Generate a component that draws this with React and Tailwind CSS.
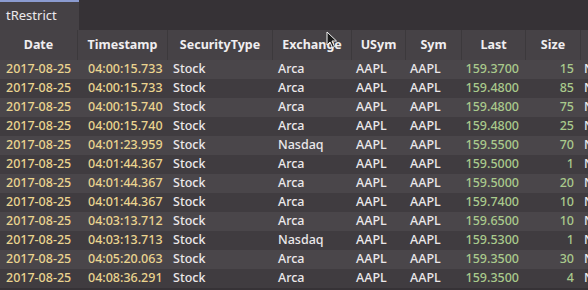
import React from "react";

const rows = [
  ["04:00:15.733", "Arca", "159.3700", "15"],
  ["04:00:15.733", "Arca", "159.4800", "85"],
  ["04:00:15.740", "Arca", "159.4800", "75"],
  ["04:00:15.740", "Arca", "159.4800", "25"],
  ["04:01:23.959", "Nasdaq", "159.5500", "70"],
  ["04:01:44.367", "Arca", "159.5000", "1"],
  ["04:01:44.367", "Arca", "159.5000", "20"],
  ["04:01:44.367", "Arca", "159.7400", "10"],
  ["04:03:13.712", "Arca", "159.6500", "10"],
  ["04:03:13.713", "Nasdaq", "159.5300", "1"],
  ["04:05:20.063", "Arca", "159.3500", "30"],
  ["04:08:36.291", "Arca", "159.3500", "4"],
];

const headers = [
  ["Date", "w-[78px]"],
  ["Timestamp", "w-[90px]"],
  ["SecurityType", "w-[105px]"],
  ["Exchange", "w-[79px]"],
  ["USym", "w-[54px]"],
  ["Sym", "w-[56px]"],
  ["Last", "w-[64px]"],
  ["Size", "w-[55px]"],
];

export default function App() {
  return (
    <div
      className="relative w-[588px] h-[290px] overflow-hidden bg-[#363236] text-[12.5px] font-medium text-[#ebe8ea]"
      style={{ fontFamily: '"Noto Sans", "Open Sans", sans-serif' }}
    >
      <div className="flex h-[30px]">
        <div className="w-[79px] h-[30px] bg-[#454145] border-t-2 border-[#8b9bd0] flex items-center pl-[6px] text-[13px] font-normal text-[#ece9eb]">
          tRestrict
        </div>
      </div>
      <div className="flex h-[30px] bg-[#464246] font-bold text-[12.5px] text-[#f0eef0]">
        {headers.map(([h, w]) => (
          <div
            key={h}
            className={`${w} shrink-0 flex items-center justify-center border-r border-[#3c393c]`}
          >
            {h}
          </div>
        ))}
        <div className="flex-1" />
      </div>
      <div>
        {rows.map((r, i) => (
          <div
            key={i}
            className={`flex h-[19px] items-center ${i % 2 === 0 ? "bg-[#4a464a]" : "bg-[#403c40]"}`}
          >
            <div className="w-[78px] shrink-0 pl-[6px] text-[#ead48f]">2017-08-25</div>
            <div className="w-[90px] shrink-0 pl-[10px] text-[#ead48f]">{r[0]}</div>
            <div className="w-[105px] shrink-0 pl-[5px]">Stock</div>
            <div className="w-[79px] shrink-0 pl-[5px]">{r[1]}</div>
            <div className="w-[54px] shrink-0 pl-[4px]">AAPL</div>
            <div className="w-[56px] shrink-0 pl-[4px]">AAPL</div>
            <div className="w-[64px] shrink-0 pr-[7px] text-right text-[#a9c98c]">{r[2]}</div>
            <div className="w-[55px] shrink-0 pr-[7px] text-right text-[#a9c98c]">{r[3]}</div>
            <div className="flex-1 pl-[3px] overflow-hidden whitespace-nowrap">N</div>
          </div>
        ))}
      </div>
      <svg
        className="absolute left-[326px] top-[31px]"
        width="12"
        height="18"
        viewBox="0 0 12 18"
      >
        <path
          d="M1 1 L1 14 L4 11 L6.5 16.5 L8.5 15.5 L6 10 L10.5 10 Z"
          fill="#1a1a1a"
          stroke="#f4f4f4"
          strokeWidth="1"
        />
      </svg>
    </div>
  );
}
